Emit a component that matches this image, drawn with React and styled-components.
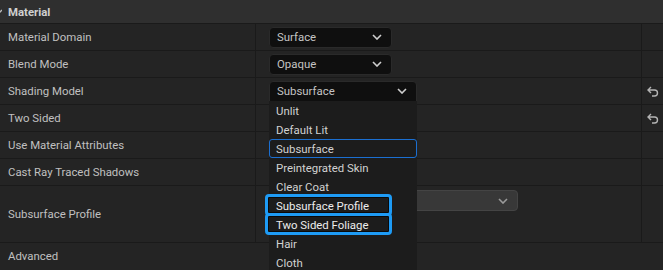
import React from 'react';
import styled, { createGlobalStyle, css } from 'styled-components';

const GlobalStyle = createGlobalStyle`
  html, body {
    margin: 0;
    padding: 0;
    background: #242424;
    overflow: hidden;
  }
  body {
    font-family: Roboto, "Liberation Sans", sans-serif;
    font-size: 11.4px;
    color: #c0c0c0;
  }
`;

const Panel = styled.div`
  width: 663px;
  height: 270px;
  display: flex;
  flex-direction: column;
  overflow: hidden;
`;

const Header = styled.div`
  height: 23px;
  flex: none;
  display: flex;
  align-items: center;
  gap: 6px;
  background: #2f2f2f;
  border-bottom: 1px solid #1a1a1a;
  font-weight: 700;
  color: #cfcfcf;
`;

const Row = styled.div`
  flex: none;
  display: grid;
  grid-template-columns: 256px 1fr 21px;
  height: ${({ tall }) => (tall ? 56 : 26)}px;
  border-bottom: 1px solid #1a1a1a;
  background: #242424;
`;

const Label = styled.div`
  display: flex;
  align-items: center;
  padding-left: 8px;
  border-right: 1px solid #1a1a1a;
`;

const Value = styled.div`
  position: relative;
  display: flex;
  align-items: ${({ top }) => (top ? 'flex-start' : 'center')};
  padding: ${({ top }) => (top ? '4px 0 0 13px' : '0 0 0 13px')};
  border-right: 1px solid #1a1a1a;
`;

const Reset = styled.div`
  display: flex;
  align-items: center;
  justify-content: center;
  padding-left: 1px;
`;

const CategoryRow = styled.div`
  flex: none;
  height: 26px;
  display: flex;
  align-items: center;
  padding-left: 8px;
`;

const Combo = styled.div`
  box-sizing: border-box;
  width: ${({ w }) => w}px;
  height: 21px;
  display: flex;
  align-items: center;
  justify-content: space-between;
  padding: 0 9px 0 7px;
  border-radius: 4px;
  background: ${({ light }) => (light ? '#383838' : '#0f0f0f')};
  border: 1px solid ${({ light }) => (light ? '#444444' : '#2a2a2a')};
  color: #c4c4c4;
  ${({ light }) =>
    light &&
    css`
      justify-content: flex-end;
    `}
  ${({ open }) =>
    open &&
    css`
      border-bottom-left-radius: 0;
      border-bottom-right-radius: 0;
    `}
`;

const Popup = styled.div`
  position: absolute;
  left: 13px;
  top: 23px;
  width: 148px;
  background: #1c1c1c;
  z-index: 10;
`;

const Item = styled.div`
  position: relative;
  box-sizing: border-box;
  height: 19px;
  display: flex;
  align-items: center;
  padding-left: 7px;
  color: #d2d2d2;
  ${({ selected }) =>
    selected &&
    css`
      border: 1px solid #1b6fd1;
      border-radius: 3px;
      padding-left: 6px;
    `}
  ${({ marked }) =>
    marked &&
    css`
      color: #ececec;
      &::after {
        content: '';
        position: absolute;
        left: -4px;
        width: 127px;
        top: -2px;
        bottom: -1px;
        box-sizing: border-box;
        border: 3px solid #1e9bf5;
        border-radius: 4px;
        box-shadow: inset 0 0 0 1px #0a0a0a;
        pointer-events: none;
      }
    `}
`;

const Chevron = ({ color = '#cfcfcf' }) => (
  <svg width="10" height="6" viewBox="0 0 10 6">
    <path d="M1 1 L5 5 L9 1" fill="none" stroke={color} strokeWidth="1.6" />
  </svg>
);

const ResetArrow = () => (
  <svg width="12" height="11" viewBox="0 0 12 11">
    <path
      d="M4 1 L1 4 L4 7 M1.5 4 H7.5 A3 3 0 0 1 7.5 10 H5"
      fill="none"
      stroke="#b4b4b4"
      strokeWidth="1.4"
    />
  </svg>
);

const CollapseArrow = styled.svg`
  margin-left: -4px;
`;

const shadingModels = [
  'Unlit',
  'Default Lit',
  'Subsurface',
  'Preintegrated Skin',
  'Clear Coat',
  'Subsurface Profile',
  'Two Sided Foliage',
  'Hair',
  'Cloth',
];

const marked = ['Subsurface Profile', 'Two Sided Foliage'];

const App = () => (
  <>
    <GlobalStyle />
    <Panel>
      <Header>
        <CollapseArrow width="6" height="6" viewBox="0 0 6 6">
          <path d="M0 1 L3 4 L6 1" fill="none" stroke="#bbb" strokeWidth="1.4" />
        </CollapseArrow>
        Material
      </Header>
      <Row>
        <Label>Material Domain</Label>
        <Value>
          <Combo w={123}>
            Surface
            <Chevron />
          </Combo>
        </Value>
        <Reset />
      </Row>
      <Row>
        <Label>Blend Mode</Label>
        <Value>
          <Combo w={123}>
            Opaque
            <Chevron />
          </Combo>
        </Value>
        <Reset />
      </Row>
      <Row>
        <Label>Shading Model</Label>
        <Value>
          <Combo w={148} open>
            Subsurface
            <Chevron />
          </Combo>
          <Popup>
            {shadingModels.map(name => (
              <Item key={name} selected={name === 'Subsurface'} marked={marked.includes(name)}>
                {name}
              </Item>
            ))}
          </Popup>
        </Value>
        <Reset>
          <ResetArrow />
        </Reset>
      </Row>
      <Row>
        <Label>Two Sided</Label>
        <Value />
        <Reset>
          <ResetArrow />
        </Reset>
      </Row>
      <Row>
        <Label>Use Material Attributes</Label>
        <Value />
        <Reset />
      </Row>
      <Row>
        <Label>Cast Ray Traced Shadows</Label>
        <Value />
        <Reset />
      </Row>
      <Row tall>
        <Label>Subsurface Profile</Label>
        <Value top>
          <Combo w={249} light>
            <Chevron color="#9a9a9a" />
          </Combo>
        </Value>
        <Reset />
      </Row>
      <CategoryRow>Advanced</CategoryRow>
    </Panel>
  </>
);

export default App;
